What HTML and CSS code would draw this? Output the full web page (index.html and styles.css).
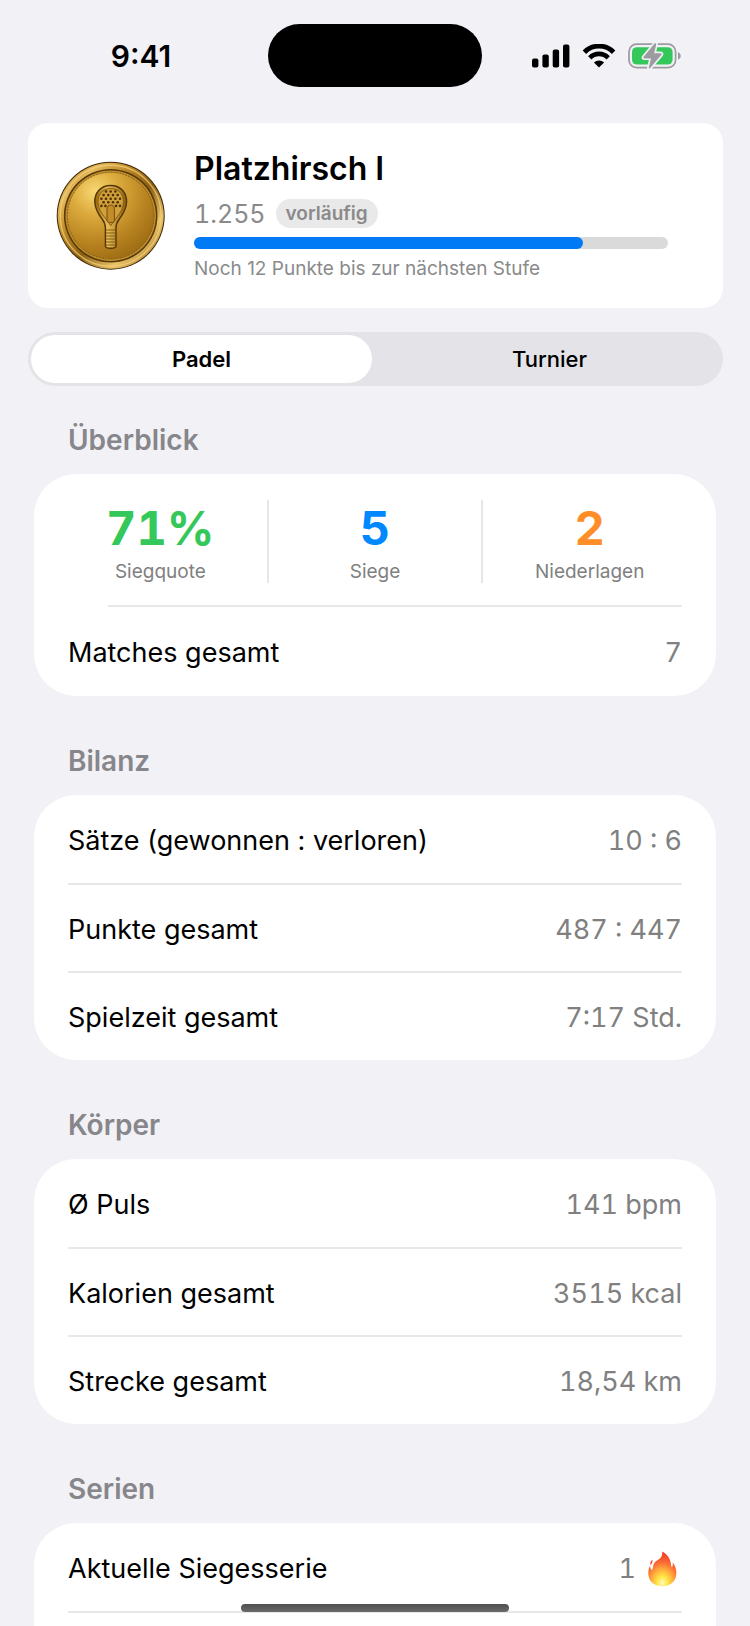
FILE: index.html
```html
<!DOCTYPE html>
<html lang="de">
<head>
  <meta charset="UTF-8">
  <title>Statistik</title>
  <meta name="viewport" content="width=device-width, initial-scale=1.0">
  <link rel="stylesheet" href="styles.css">
</head>
<body>
  <header class="status-bar">
    <div class="status-time">9:41</div>
    <div class="island"></div>
    <div class="status-icons">
      <svg class="icon-signal" viewBox="0 0 38 24" width="38" height="24">
        <rect x="0" y="14.5" width="6.4" height="9" rx="2"/>
        <rect x="10.4" y="10.5" width="6.4" height="13" rx="2"/>
        <rect x="20.7" y="5.5" width="6.4" height="18" rx="2"/>
        <rect x="31" y="0.5" width="6.4" height="23" rx="2"/>
      </svg>
      <svg class="icon-wifi" viewBox="0 0 34 24" width="34" height="24">
        <path d="M2.4 8.2A20.4 20.4 0 0 1 31.6 8.2" fill="none" stroke="#000" stroke-width="4.8"/>
        <path d="M7.8 13.8A12.8 12.8 0 0 1 26.2 13.8" fill="none" stroke="#000" stroke-width="4.6"/>
        <path d="M17 23.6L11.9 18.5A7.2 7.2 0 0 1 22.1 18.5Z"/>
      </svg>
      <svg class="icon-battery" viewBox="0 0 54 26" width="54" height="26">
        <rect x="1" y="1.2" width="46.6" height="23.4" rx="7.6" fill="none" stroke="#9b9ba0" stroke-width="1.7"/>
        <rect x="4" y="4.2" width="40.6" height="17.4" rx="4.8" fill="#34c759"/>
        <path d="M50 9.2c3.6 1 3.6 6.4 0 7.4z" fill="#9b9ba0"/>
        <path d="M26.600 0.600L15.600 13.800c-.6.8-.2 1.600.8 1.600h6.600L20.800 24.400c-.2 1 .8 1.400 1.400.6L33.400 11.800c.6-.8.2-1.600-.8-1.600h-6.400L28.200 1.400c.2-1-.9-1.600-1.600-.8z" fill="#9b9ba0" stroke="#f2f1f6" stroke-width="3.4" stroke-linejoin="round" paint-order="stroke"/>
      </svg>
    </div>
  </header>

  <main class="content">
    <section class="rank-card">
      <svg class="coin" viewBox="0 0 110 110" width="110" height="110">
        <defs>
          <linearGradient id="rim" x1="0" y1="0" x2="1" y2="1">
            <stop offset="0" stop-color="#a87618"/>
            <stop offset="0.2" stop-color="#e6bb5c"/>
            <stop offset="0.35" stop-color="#c08d28"/>
            <stop offset="0.55" stop-color="#8a5d10"/>
            <stop offset="0.75" stop-color="#ecc469"/>
            <stop offset="1" stop-color="#8f6214"/>
          </linearGradient>
          <radialGradient id="face" cx="0.32" cy="0.22" r="0.9">
            <stop offset="0" stop-color="#f8d873"/>
            <stop offset="0.3" stop-color="#dcab3d"/>
            <stop offset="0.65" stop-color="#b98421"/>
            <stop offset="1" stop-color="#966610"/>
          </radialGradient>
          <linearGradient id="metal" x1="0" y1="0" x2="1" y2="0">
            <stop offset="0" stop-color="#94640f"/>
            <stop offset="0.4" stop-color="#e8bd53"/>
            <stop offset="1" stop-color="#8a5c0e"/>
          </linearGradient>
        </defs>
        <circle cx="54.7" cy="54.7" r="54" fill="#3c2605"/>
        <circle cx="54.7" cy="54.7" r="53" fill="url(#rim)"/>
        <circle cx="54.7" cy="54.7" r="50.4" fill="none" stroke="#f3d180" stroke-width="1.4" opacity="0.7"/>
        <circle cx="54.7" cy="54.7" r="46.8" fill="#5a3a08"/>
        <circle cx="54.7" cy="54.7" r="45.2" fill="#c08f30"/>
        <circle cx="54.7" cy="54.7" r="43.4" fill="url(#face)" stroke="#74500f" stroke-width="0.8" stroke-dasharray="2 1"/>
        <!-- racket frame -->
        <path d="M54.7 24.500C44 24.500 38.600 32.500 38.800 41c.2 7.600 3.800 12.500 7.400 17.200 2.400 3 3.200 5.600 3.200 9V85c0 3 10.600 3 10.600 0V67.200c0-3.400.8-6 3.200-9 3.600-4.700 7.200-9.600 7.400-17.200.2-8.500-5.200-16.500-15.900-16.500z" fill="url(#metal)" stroke="#563706" stroke-width="1.400"/>
        <path d="M54.700 27.600C46.500 27.600 41.800 33.600 42 41c.2 6.400 3 10.800 6.200 14.700 2.600 3.200 4.600 6 6.500 9 1.900-3 3.900-5.800 6.500-9 3.200-3.900 6-8.300 6.200-14.700.2-7.400-4.500-13.400-12.700-13.400z" fill="#d2a03a" stroke="#7f560f" stroke-width="0.900"/>
        <g fill="#4d3105">
          <circle cx="50" cy="30.500" r="1.300"/><circle cx="54.700" cy="30.500" r="1.300"/><circle cx="59.400" cy="30.500" r="1.300"/>
          <circle cx="47.600" cy="34.100" r="1.300"/><circle cx="52.300" cy="34.100" r="1.300"/><circle cx="57" cy="34.100" r="1.300"/><circle cx="61.700" cy="34.100" r="1.300"/>
          <circle cx="45.400" cy="37.700" r="1.300"/><circle cx="50" cy="37.700" r="1.300"/><circle cx="54.700" cy="37.700" r="1.300"/><circle cx="59.400" cy="37.700" r="1.300"/><circle cx="64" cy="37.700" r="1.300"/>
          <circle cx="47.600" cy="41.300" r="1.300"/><circle cx="52.300" cy="41.300" r="1.300"/><circle cx="57" cy="41.300" r="1.300"/><circle cx="61.700" cy="41.300" r="1.300"/>
          <circle cx="45.400" cy="44.900" r="1.300"/><circle cx="49.400" cy="44.900" r="1.300"/><circle cx="60" cy="44.900" r="1.300"/><circle cx="64" cy="44.900" r="1.300"/>
        </g>
        <path d="M51 60V47.500c0-4.600 7.400-4.600 7.400 0V60c0 2-7.400 2-7.400 0z" fill="#c18c29" stroke="#6b460a" stroke-width="0.900"/>
        <path d="M50 69h9.400M50 72h9.400M50 75h9.400M50 78h9.400M50 81h9.400M50 84h9.400" stroke="#6b460a" stroke-width="0.800"/>
      </svg>
      <div class="rank-info">
        <h1 class="rank-title">Platzhirsch I</h1>
        <div class="rank-points">
          <span class="points">1.255</span>
          <span class="badge">vorläufig</span>
        </div>
        <div class="progress" role="progressbar" aria-valuenow="82" aria-valuemin="0" aria-valuemax="100">
          <div class="progress-fill" style="width: 82%"></div>
        </div>
        <p class="rank-hint">Noch 12 Punkte bis zur nächsten Stufe</p>
      </div>
    </section>

    <div class="segmented">
      <button class="segment active" type="button">Padel</button>
      <button class="segment" type="button">Turnier</button>
    </div>

    <section class="group first">
      <h2 class="group-title">Überblick</h2>
      <div class="card">
        <div class="stats">
          <div class="stat">
            <span class="stat-value green">71%</span>
            <span class="stat-label">Siegquote</span>
          </div>
          <div class="stat">
            <span class="stat-value blue">5</span>
            <span class="stat-label">Siege</span>
          </div>
          <div class="stat">
            <span class="stat-value orange">2</span>
            <span class="stat-label">Niederlagen</span>
          </div>
        </div>
        <div class="row"><span>Matches gesamt</span><span class="value">7</span></div>
      </div>
    </section>

    <section class="group">
      <h2 class="group-title">Bilanz</h2>
      <div class="card">
        <div class="row"><span>Sätze (gewonnen : verloren)</span><span class="value">10 : 6</span></div>
        <div class="row"><span>Punkte gesamt</span><span class="value">487 : 447</span></div>
        <div class="row"><span>Spielzeit gesamt</span><span class="value">7:17 Std.</span></div>
      </div>
    </section>

    <section class="group">
      <h2 class="group-title">Körper</h2>
      <div class="card">
        <div class="row"><span>Ø Puls</span><span class="value">141 bpm</span></div>
        <div class="row"><span>Kalorien gesamt</span><span class="value">3515 kcal</span></div>
        <div class="row"><span>Strecke gesamt</span><span class="value">18,54 km</span></div>
      </div>
    </section>

    <section class="group">
      <h2 class="group-title">Serien</h2>
      <div class="card">
        <div class="row">
          <span>Aktuelle Siegesserie</span>
          <span class="value">1
            <svg class="flame" viewBox="0 0 38 36" width="38" height="36">
              <defs>
                <radialGradient id="fire" cx="0.5" cy="0.9" r="0.85">
                  <stop offset="0" stop-color="#fffbc0"/>
                  <stop offset="0.22" stop-color="#ffe545"/>
                  <stop offset="0.45" stop-color="#ffae3c"/>
                  <stop offset="0.7" stop-color="#fb6a35"/>
                  <stop offset="1" stop-color="#ee4023"/>
                </radialGradient>
              </defs>
              <path d="M18.200 0.500c4.600 2.400 8.800 7 9 14.500.2 1.200 1.200 1 1.500 0 .3-1.300.1-2.600-.2-3.800 3 3.400 4.300 7.600 3.800 12.400C31.600 31 25.500 35.300 18.500 35.300S5.500 31.600 4.500 24.500c-.5-3.500 0-6.900 1.600-9.900.1 2 .5 3.700 1.700 4.700C8.900 17.500 9 15.500 9.600 13.500c.8-2.800 3-3.400 5.600-5.500 2.600-2 3.300-4.500 3-7.500z" fill="url(#fire)"/>
              <path d="M8.500 8.500C6.500 10 5.800 11.700 6.400 14c1.600-1.400 2.400-3 2.100-5.500z" fill="#f0543a"/>
            </svg>
          </span>
        </div>
        <div class="row"></div>
      </div>
    </section>
  </main>

  <div class="home-indicator"></div>
</body>
</html>
```

FILE: styles.css
```css
* {
  box-sizing: border-box;
}
body {
  margin: 0;
  height: 100vh;
  overflow: hidden;
  background: #f2f1f6;
  color: #000;
  font-family: Inter, "Liberation Sans", sans-serif;
  font-size: 27px;
  line-height: 34px;
}
h1, h2, p {
  margin: 0;
}

/* status bar */
.status-bar {
  display: grid;
  grid-template-columns: 1fr 214px 1fr;
  align-items: center;
  padding-top: 24px;
  height: 87px;
}
.status-time {
  padding-left: 14px;
  font-size: 30px;
  font-weight: 600;
  text-align: center;
}
.island {
  height: 63px;
  border-radius: 32px;
  background: #000;
}
.status-icons {
  display: flex;
  align-items: center;
  gap: 12px;
  padding-left: 50px;
}

.content {
  padding: 36px 27px 0 28px;
}

/* rank */
.rank-card {
  display: flex;
  align-items: center;
  gap: 28px;
  height: 185px;
  padding: 0 55px 0 28px;
  border-radius: 20px;
  background: #fff;
}
.coin {
  flex: none;
}
.rank-info {
  flex: 1;
}
.rank-title {
  font-size: 32px;
  font-weight: 600;
  line-height: 42px;
}
.rank-points {
  display: flex;
  align-items: center;
  gap: 10px;
  height: 47px;
}
.points {
  color: #8a8a8a;
  font-size: 25px;
  font-variant-numeric: tabular-nums;
}
.badge {
  padding: 0 10px;
  border-radius: 15px;
  background: #e9e9e9;
  color: #8a8a8a;
  font-size: 19px;
  font-weight: 600;
  line-height: 29px;
}
.progress {
  height: 12px;
  border-radius: 6px;
  background: #dadada;
}
.progress-fill {
  height: 100%;
  border-radius: 6px;
  background: #007af5;
}
.rank-hint {
  margin-top: 6px;
  color: #8a8a8a;
  font-size: 19px;
  line-height: 28px;
}

/* segmented control */
.segmented {
  display: flex;
  gap: 7px;
  height: 54px;
  margin-top: 24px;
  padding: 3px;
  border-radius: 27px;
  background: #e4e3e8;
}
.segment {
  flex: 1;
  border: 0;
  border-radius: 24px;
  background: none;
  color: #000;
  font: 500 22px Inter, "Liberation Sans", sans-serif;
  cursor: pointer;
}
.segment.active {
  background: #fff;
  font-weight: 600;
}

/* grouped lists */
.group {
  padding: 0 7px 0 6px;
}
.group-title {
  padding: 46px 34px 14px;
  color: #86868b;
  font-size: 28px;
  font-weight: 600;
  line-height: 39px;
}
.first .group-title {
  padding-top: 35px;
}
.card {
  padding: 0 34px 1px;
  border-radius: 42px;
  background: #fff;
}
.row {
  display: flex;
  align-items: center;
  justify-content: space-between;
  height: 88px;
  padding-top: 3px;
}
.row + .row {
  border-top: 2px solid #e8e8e8;
}
.value {
  display: flex;
  align-items: center;
  gap: 8px;
  color: #808080;
  font-variant-numeric: tabular-nums;
}

.stats {
  display: flex;
  position: relative;
  height: 133px;
  margin: 0 -14px;
  padding: 26px 0 24px;
}
.stats::after {
  content: "";
  position: absolute;
  left: 54px;
  right: 14px;
  bottom: 0;
  height: 2px;
  background: #e8e8e8;
}
.stat {
  flex: 1;
  display: flex;
  flex-direction: column;
  align-items: center;
}
.stat + .stat {
  border-left: 2px solid #e6e6e6;
}
.stat-value {
  font-size: 47px;
  font-weight: 700;
  line-height: 55px;
  font-variant-numeric: tabular-nums;
}
.stat-label {
  margin-top: 6px;
  color: #808080;
  font-size: 19px;
  line-height: 22px;
}
.green { color: #34c759; }
.blue { color: #0088ff; }
.orange { color: #ff8d28; }

.home-indicator {
  position: fixed;
  left: 50%;
  bottom: 14px;
  width: 268px;
  height: 8px;
  margin-left: -134px;
  border-radius: 4px;
  background: linear-gradient(#505050, #6a6a6a);
}
```
